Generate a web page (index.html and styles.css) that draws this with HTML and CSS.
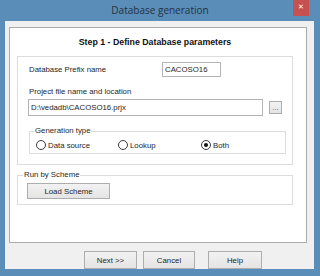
FILE: index.html
```html
<!DOCTYPE html>
<html lang="en">
<head>
    <meta charset="UTF-8">
    <title>Database generation</title>
    <link rel="stylesheet" href="styles.css">
</head>
<body>

<div class="window">
    <!-- Barra de titulo -->
    <div class="titlebar">
        <span></span>
        <span class="title">Database generation</span>
        <span class="close">&#x2715;</span>
    </div>

    <div class="client">
        <div class="panel">
            <h1>Step 1 - Define Database parameters</h1>

            <!-- Parametros -->
            <div class="group params">
                <div class="prefix-row">
                    <label for="prefix">Database Prefix name</label>
                    <input type="text" id="prefix" class="field prefix" value="CACOSO16">
                </div>

                <label for="path" class="loc-label">Project file name and location</label>
                <div class="path-row">
                    <input type="text" id="path" class="field path" value="D:\vedadb\CACOSO16.prjx">
                    <button type="button" class="btn browse">...</button>
                </div>

                <fieldset class="gen">
                    <legend>Generation type</legend>
                    <div class="radios">
                        <span class="radio-item"><span class="radio"></span>Data source</span>
                        <span class="radio-item"><span class="radio"></span>Lookup</span>
                        <span class="radio-item"><span class="radio checked"></span>Both</span>
                    </div>
                </fieldset>
            </div>

            <!-- Esquema -->
            <fieldset class="group scheme">
                <legend>Run by Scheme</legend>
                <button type="button" class="btn load">Load Scheme</button>
            </fieldset>
        </div>

        <div class="footer">
            <button type="button" class="btn next">Next &gt;&gt;</button>
            <button type="button" class="btn cancel">Cancel</button>
            <button type="button" class="btn help">Help</button>
        </div>
    </div>
</div>

</body>
</html>
```

FILE: styles.css
```css
body {
    margin: 0;
    padding: 0;
    background-color: #5a8db8;
    font-family: "Liberation Sans", Arial, sans-serif;
    font-size: 7.8px;
    color: #262626;
}
.window {
    width: 320px;
    height: 276px;
    display: flex;
    flex-direction: column;
    overflow: hidden;
}
.titlebar {
    height: 21px;
    display: grid;
    grid-template-columns: 1fr auto 1fr;
    align-items: start;
}
.title {
    font-family: "Open Sans", "Liberation Sans", sans-serif;
    font-size: 10px;
    line-height: 21px;
    color: #23323f;
}
.close {
    justify-self: end;
    margin-right: 11px;
    width: 16px;
    height: 16px;
    background-color: #c75050;
    color: #fff;
    font-family: "DejaVu Sans", sans-serif;
    font-size: 7px;
    font-weight: bold;
    line-height: 15px;
    text-align: center;
}
.client {
    flex: 1;
    margin: 0 6px 10px 5px;
    background-color: #f0f0f0;
    display: flex;
    flex-direction: column;
}
.panel {
    margin: 6px 7px 0 4px;
    height: 207px;
    background-color: #fff;
    border: 1px solid #ababab;
    padding-top: 7px;
}
h1 {
    margin: 0;
    padding-right: 6px;
    font-size: 8.8px;
    line-height: 14px;
    font-weight: bold;
    text-align: center;
    color: #111;
}
.group {
    box-sizing: border-box;
    margin: 7px 13px 0 7px;
    border: 1px solid #dcdcdc;
}
.params {
    height: 109px;
    padding: 5px 6px 0 11px;
}
.prefix-row {
    display: grid;
    grid-template-columns: 133px 59px;
    align-items: center;
    height: 15px;
}
.field {
    box-sizing: border-box;
    margin: 0;
    border: 1px solid #b4b4b4;
    background-color: #fff;
    font-family: inherit;
    font-size: 7.8px;
    color: #262626;
    padding: 0 2px;
}
.prefix {
    width: 59px;
    height: 15px;
}
.loc-label {
    display: block;
    margin-top: 8px;
    line-height: 14px;
}
.path-row {
    display: flex;
    align-items: center;
    margin-left: -1px;
}
.path {
    width: 235px;
    height: 17px;
}
.btn {
    box-sizing: border-box;
    margin: 0;
    padding: 0;
    border: 1px solid #adadad;
    background: linear-gradient(#f2f2f2, #e4e4e4);
    font-family: inherit;
    font-size: 7.8px;
    color: #262626;
}
.browse {
    width: 13px;
    height: 13px;
    margin-left: 6px;
    line-height: 8px;
    color: #555;
}
fieldset {
    margin: 0;
    min-inline-size: 0;
}
legend {
    line-height: 12px;
    padding: 0 1px;
}
.gen {
    box-sizing: border-box;
    width: 257px;
    height: 29px;
    margin-top: 9px;
    border: 1px solid #dcdcdc;
    padding: 2px 6px 0 6px;
}
.gen legend {
    margin-left: -2px;
}
.radios {
    display: grid;
    grid-template-columns: 82px 83px auto;
    height: 12px;
    align-items: center;
}
.radio-item {
    display: flex;
    align-items: center;
    gap: 2px;
}
.radio {
    box-sizing: border-box;
    width: 10px;
    height: 10px;
    border: 1px solid #3a3a3a;
    border-radius: 50%;
    background-color: #fff;
    display: flex;
    align-items: center;
    justify-content: center;
}
.radio.checked::after {
    content: "";
    width: 4px;
    height: 4px;
    border-radius: 50%;
    background-color: #111;
}
.scheme {
    height: 36px;
    margin-top: 4px;
    padding: 2px 9px 0 9px;
}
.scheme legend {
    margin-left: -4px;
}
.load {
    display: block;
    width: 83px;
    height: 16px;
}
.footer {
    display: flex;
    padding: 8px 0 0 79px;
}
.footer .btn {
    height: 18px;
}
.next {
    width: 53px;
}
.cancel {
    width: 52px;
    margin-left: 6px;
}
.help {
    width: 54px;
    margin-left: 13px;
}
```
